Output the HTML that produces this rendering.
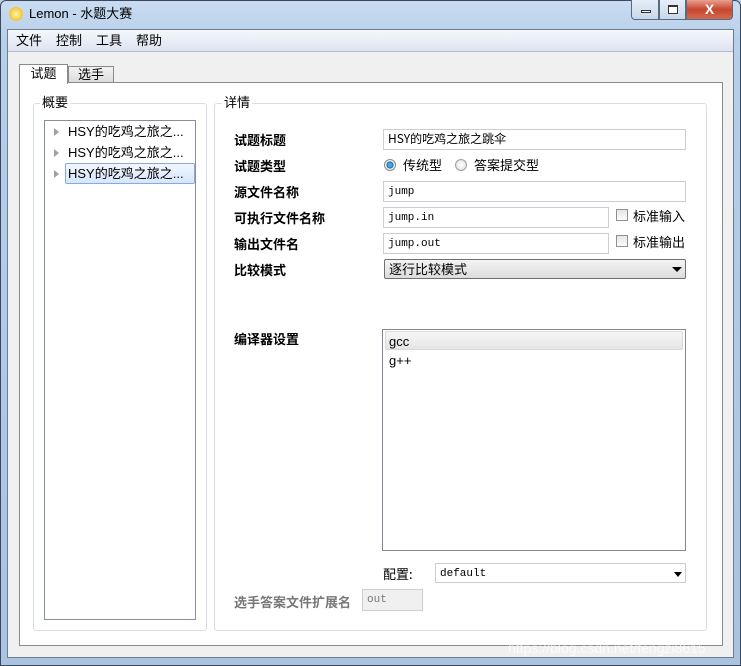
<!DOCTYPE html>
<html><head><meta charset="utf-8"><style>
*{box-sizing:border-box;margin:0;padding:0}
body{width:741px;height:666px;overflow:hidden;background:#bcd3ec;font-family:"Liberation Sans","Noto Sans CJK SC",sans-serif;font-size:13px;line-height:15px;color:#000;position:relative}
.abs{position:absolute}
.frame{left:0;top:0;width:741px;height:666px;background:linear-gradient(180deg,#c9dcf1 0,#b7cfe9 40px,#a9c3e0 100%);border:1px solid #3a4a5c;border-radius:6px 6px 0 0}
.client{left:7px;top:29px;width:727px;height:629px;background:#f0f0f0;border:1px solid #6b7d92}
.menu{left:8px;top:30px;width:725px;height:22px;background:linear-gradient(#f5f7fb,#dde3f0);border-bottom:1px solid #b6bccc}
.menu span{position:absolute;top:3px;font-size:13px}
.tb{top:0;height:20px;border:1px solid #5a6a80;border-top:none}
.pane{left:19px;top:82px;width:704px;height:564px;background:#fff;border:1px solid #8a8a8a}
.grp{border:1px solid #d5dfe5;border-radius:3px}
.gl{background:#fff;padding:0 2px;font-size:13px}
.lbl{left:234px;font-weight:bold;font-size:13px;font-family:"Noto Sans CJK SC",sans-serif}
.in{background:#fff;border:1px solid #c9ced6;height:21px;font-family:"Liberation Mono","Noto Sans CJK SC",monospace;font-size:11px;padding:4px 4px;line-height:12px}
.cb{width:12px;height:12px;border:1px solid #8f8f8f;background:linear-gradient(#e6e6e6,#fafafa)}
.tri{width:0;height:0;border-left:5px solid transparent;border-right:5px solid transparent;border-top:5px solid #000}
.item{font-size:13px}
.arr{width:0;height:0;border-top:4px solid transparent;border-bottom:4px solid transparent;border-left:5px solid #a0a0a0}
</style></head><body>
<div class="abs frame"></div>
<div class="abs" style="left:9px;top:7px;width:14px;height:14px;border-radius:50%;background:radial-gradient(#fff6b0,#f2c330 70%,#c99a10)"></div>
<div class="abs" style="left:29px;top:6px;font-size:13px">Lemon - 水题大赛</div>
<div class="abs tb" style="left:631px;width:28px;background:linear-gradient(#e6eef8,#c8d8ea);border-radius:0 0 0 4px"><div class="abs" style="left:9px;top:10px;width:10px;height:3px;border:1px solid #333;background:#fff"></div></div>
<div class="abs tb" style="left:659px;width:27px;background:linear-gradient(#e6eef8,#c8d8ea)"><div class="abs" style="left:8px;top:5px;width:10px;height:9px;border:1px solid #333;border-top-width:2px;background:#fff"></div></div>
<div class="abs tb" style="left:686px;width:47px;background:linear-gradient(#e8a190,#c8452e 50%,#d36a50);border-radius:0 0 4px 0;color:#fff;font-weight:bold;font-size:14px;text-align:center;line-height:18px">X</div>
<div class="abs client"></div>
<div class="abs menu"><span style="left:8px">文件</span><span style="left:48px">控制</span><span style="left:88px">工具</span><span style="left:128px">帮助</span></div>
<div class="abs" style="left:68px;top:66px;width:46px;height:17px;background:linear-gradient(#f2f2f2,#dcdcdc);border:1px solid #8a8a8a;font-size:13px;text-align:center;line-height:15px">选手</div>
<div class="abs pane"></div>
<div class="abs" style="left:19px;top:64px;width:49px;height:20px;background:#fff;border:1px solid #8a8a8a;border-bottom:none;font-size:13px;text-align:center;line-height:17px">试题</div>
<div class="abs grp" style="left:33px;top:103px;width:174px;height:528px"></div>
<div class="abs gl" style="left:40px;top:95px">概要</div>
<div class="abs" style="left:44px;top:120px;width:152px;height:500px;border:1px solid #8c8c9a;background:#fff"></div>
<div class="abs arr" style="left:54px;top:128px"></div>
<div class="abs item" style="left:68px;top:124px">HSY的吃鸡之旅之...</div>
<div class="abs arr" style="left:54px;top:149px"></div>
<div class="abs item" style="left:68px;top:145px">HSY的吃鸡之旅之...</div>
<div class="abs arr" style="left:54px;top:170px"></div>
<div class="abs" style="left:65px;top:163px;width:130px;height:21px;border:1px solid #84acdd;border-radius:2px;background:linear-gradient(#f2f7fe,#d6e6fb)"></div>
<div class="abs item" style="left:68px;top:166px">HSY的吃鸡之旅之...</div>
<div class="abs grp" style="left:214px;top:103px;width:493px;height:528px"></div>
<div class="abs gl" style="left:222px;top:95px">详情</div>
<div class="abs lbl" style="top:132px">试题标题</div>
<div class="abs lbl" style="top:158px">试题类型</div>
<div class="abs lbl" style="top:184px">源文件名称</div>
<div class="abs lbl" style="top:210px">可执行文件名称</div>
<div class="abs lbl" style="top:236px">输出文件名</div>
<div class="abs lbl" style="top:262px">比较模式</div>
<div class="abs lbl" style="top:331px">编译器设置</div>
<div class="abs in" style="left:383px;top:129px;width:303px;font-family:'Noto Sans CJK SC',sans-serif;font-size:12px;padding-top:3px">HSY的吃鸡之旅之跳伞</div>
<div class="abs" style="left:384px;top:159px;width:12px;height:12px;border-radius:50%;border:1px solid #8a8a8a;background:radial-gradient(#3fa7e8 30%,#1a5e99 45%,#f4f4f4 55%)"></div>
<div class="abs" style="left:403px;top:158px">传统型</div>
<div class="abs" style="left:455px;top:159px;width:12px;height:12px;border-radius:50%;border:1px solid #a0a0a0;background:radial-gradient(#fff,#ddd)"></div>
<div class="abs" style="left:474px;top:158px">答案提交型</div>
<div class="abs in" style="left:383px;top:181px;width:303px">jump</div>
<div class="abs in" style="left:383px;top:207px;width:226px">jump.in</div>
<div class="abs cb" style="left:616px;top:209px"></div><div class="abs" style="left:633px;top:209px">标准输入</div>
<div class="abs in" style="left:383px;top:233px;width:226px">jump.out</div>
<div class="abs cb" style="left:616px;top:235px"></div><div class="abs" style="left:633px;top:235px">标准输出</div>
<div class="abs" style="left:384px;top:259px;width:302px;height:20px;border:1px solid #707070;border-radius:2px;background:linear-gradient(#f4f4f4,#dcdcdc);padding:2px 4px">逐行比较模式</div>
<div class="abs tri" style="left:672px;top:267px"></div>
<div class="abs" style="left:382px;top:329px;width:304px;height:222px;border:1px solid #828790;background:#fff"></div>
<div class="abs" style="left:385px;top:331px;width:298px;height:19px;border:1px solid #dadada;border-radius:2px;background:linear-gradient(#f6f6f6,#e6e6e6)"></div>
<div class="abs" style="left:389px;top:334px">gcc</div>
<div class="abs" style="left:389px;top:353px">g++</div>
<div class="abs" style="left:383px;top:566px;font-family:'Noto Sans CJK SC',sans-serif">配置:</div>
<div class="abs in" style="left:435px;top:563px;width:251px;height:20px">default</div>
<div class="abs tri" style="left:674px;top:572px;border-width:5px 4px 0 4px"></div>
<div class="abs lbl" style="top:594px;color:#777">选手答案文件扩展名</div>
<div class="abs in" style="left:362px;top:589px;width:61px;height:22px;background:#f0f0f0;color:#777">out</div>
<div class="abs" style="left:508px;top:641px;color:rgba(255,255,255,.7);font-size:14px">https://blog.csdn.net/fengzi8615</div>
</body></html>
